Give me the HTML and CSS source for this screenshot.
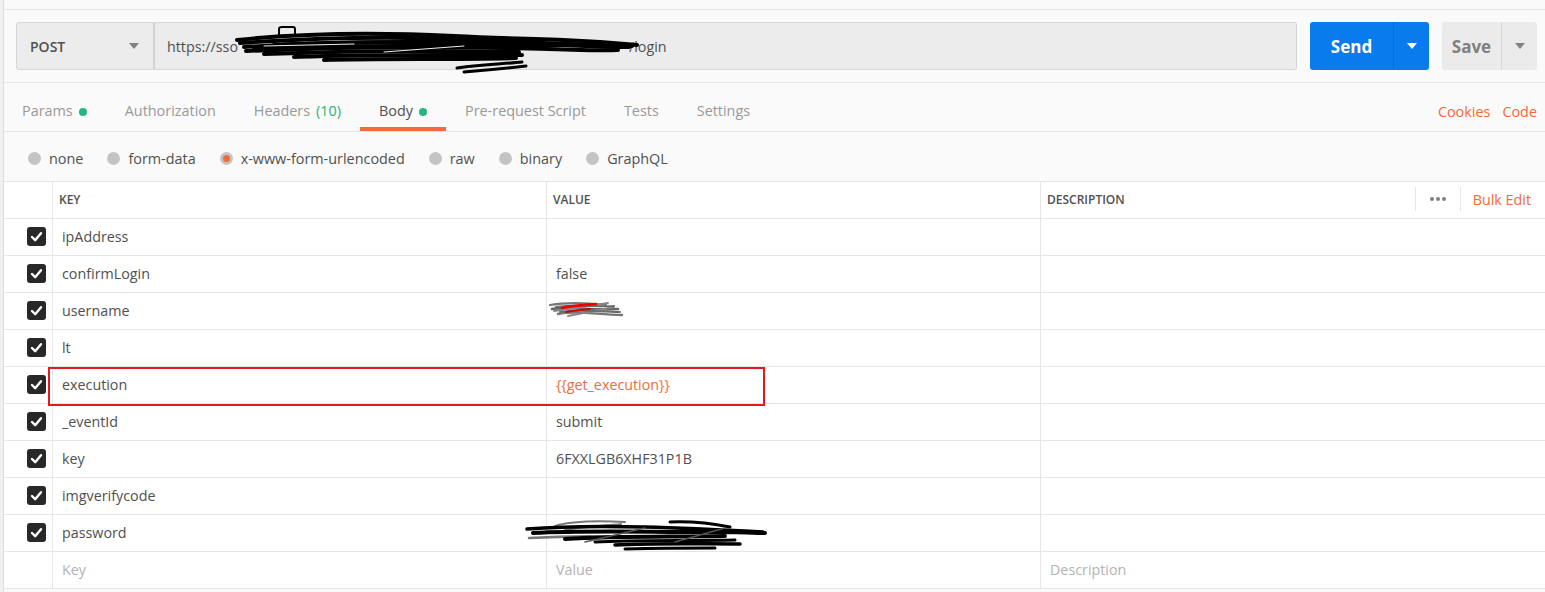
FILE: index.html
```html
<!DOCTYPE html>
<html lang="en">
  <head>
    <meta charset="UTF-8" />
    <meta name="viewport" content="width=device-width, initial-scale=1.0" />
    <title>POST login</title>
    <link rel="stylesheet" href="styles.css">
  </head>
  <body>
    <div class="edge"></div>
    <div class="main">
      <div class="top-strip"></div>

      <div class="url-bar">
        <div class="method">POST <span class="caret"></span></div>
        <div class="url">
          <span class="url-text">https://sso<span class="url-redact"><svg width="410" height="52" viewBox="0 0 410 52" fill="none" stroke="#000" stroke-width="4" stroke-linecap="round">
                <path d="M3 16 C60 10 140 8 220 12 S330 14 403 21" />
                <path d="M6 19 C80 14 160 12 240 16 S340 20 398 22" />
                <path d="M10 23 C90 18 170 17 260 19 S350 23 395 23" />
                <path d="M12 27 C100 23 180 22 270 24 S360 27 384 26" />
                <path d="M30 30 C110 27 190 26 285 28" />
                <path d="M60 33 C120 30 200 31 288 31" />
                <path d="M90 36 C150 34 220 36 282 34" />
                <path d="M40 21 C120 17 200 19 300 17" />
                <path d="M20 25 C110 21 200 22 330 21" />
                <path d="M223 44 C250 40 270 40 288 38" stroke-width="3" />
                <path d="M230 48 C255 46 275 44 292 42" stroke-width="3" />
                <path d="M45 13 L45 5 Q45 3 48 3 L59 3 Q61 3 61 5 L61 12" stroke-width="2" />
                <path d="M30 22 L120 20 M150 28 L230 22" stroke="#eee" stroke-width="1" />
              </svg></span>/login</span>
        </div>
        <div class="btn-send">
          <span class="btn-label">Send</span>
          <span class="btn-drop"><span class="caret caret-white"></span></span>
        </div>
        <div class="btn-save">
          <span class="btn-label">Save</span>
          <span class="btn-drop"><span class="caret"></span></span>
        </div>
      </div>

      <div class="tabs">
        <a class="tab">Params <span class="dot"></span></a>
        <a class="tab">Authorization</a>
        <a class="tab">Headers <span class="count">(10)</span></a>
        <a class="tab active">Body <span class="dot"></span></a>
        <a class="tab">Pre-request Script</a>
        <a class="tab">Tests</a>
        <a class="tab">Settings</a>
        <div class="tab-links">
          <a>Cookies</a>
          <a>Code</a>
        </div>
      </div>

      <div class="body-types">
        <label class="radio"><span class="circle"></span>none</label>
        <label class="radio"><span class="circle"></span>form-data</label>
        <label class="radio"><span class="circle checked"></span>x-www-form-urlencoded</label>
        <label class="radio"><span class="circle"></span>raw</label>
        <label class="radio"><span class="circle"></span>binary</label>
        <label class="radio"><span class="circle"></span>GraphQL</label>
      </div>

      <div class="kv-table">
        <div class="kv-row kv-head">
          <div class="cell check-cell"></div>
          <div class="cell">KEY</div>
          <div class="cell">VALUE</div>
          <div class="cell desc-head">
            <span>DESCRIPTION</span>
            <div class="head-actions">
              <span class="more"><i></i><i></i><i></i></span>
              <a class="bulk">Bulk Edit</a>
            </div>
          </div>
        </div>

        <div class="kv-row">
          <div class="cell check-cell"><span class="checkbox"><svg width="19" height="19" viewBox="0 0 19 19"><path d="M5 10 L8.2 13.2 L14 6.2" /></svg></span></div>
          <div class="cell">ipAddress</div>
          <div class="cell"></div>
          <div class="cell"></div>
        </div>
        <div class="kv-row">
          <div class="cell check-cell"><span class="checkbox"><svg width="19" height="19" viewBox="0 0 19 19"><path d="M5 10 L8.2 13.2 L14 6.2" /></svg></span></div>
          <div class="cell">confirmLogin</div>
          <div class="cell">false</div>
          <div class="cell"></div>
        </div>
        <div class="kv-row">
          <div class="cell check-cell"><span class="checkbox"><svg width="19" height="19" viewBox="0 0 19 19"><path d="M5 10 L8.2 13.2 L14 6.2" /></svg></span></div>
          <div class="cell">username</div>
          <div class="cell redact-cell">
            <svg class="user-redact" width="78" height="22" viewBox="0 0 78 22" fill="none" stroke-linecap="round">
              <path d="M2 6 C20 3 40 4 58 6" stroke="#777" stroke-width="2.2" />
              <path d="M4 10 C25 7 45 12 70 10" stroke="#666" stroke-width="2.6" />
              <path d="M10 15 C30 11 50 16 74 16" stroke="#777" stroke-width="2.4" />
              <path d="M6 12 L60 4 M20 17 L66 8" stroke="#888" stroke-width="1.8" />
              <path d="M8 8 C30 5 50 8 66 7 M12 13 C32 10 50 13 72 13" stroke="#6d6d6d" stroke-width="2" />
              <path d="M14 9 C26 6 36 6 48 5" stroke="#e00" stroke-width="2.6" />
              <path d="M18 13 C28 11 34 11 42 10" stroke="#c00" stroke-width="1.8" />
            </svg>
          </div>
          <div class="cell"></div>
        </div>
        <div class="kv-row">
          <div class="cell check-cell"><span class="checkbox"><svg width="19" height="19" viewBox="0 0 19 19"><path d="M5 10 L8.2 13.2 L14 6.2" /></svg></span></div>
          <div class="cell">lt</div>
          <div class="cell"></div>
          <div class="cell"></div>
        </div>
        <div class="kv-row marked">
          <div class="cell check-cell"><span class="checkbox"><svg width="19" height="19" viewBox="0 0 19 19"><path d="M5 10 L8.2 13.2 L14 6.2" /></svg></span></div>
          <div class="cell">execution</div>
          <div class="cell variable">{{get_execution}}</div>
          <div class="cell"></div>
          <div class="highlight"></div>
        </div>
        <div class="kv-row">
          <div class="cell check-cell"><span class="checkbox"><svg width="19" height="19" viewBox="0 0 19 19"><path d="M5 10 L8.2 13.2 L14 6.2" /></svg></span></div>
          <div class="cell">_eventId</div>
          <div class="cell">submit</div>
          <div class="cell"></div>
        </div>
        <div class="kv-row">
          <div class="cell check-cell"><span class="checkbox"><svg width="19" height="19" viewBox="0 0 19 19"><path d="M5 10 L8.2 13.2 L14 6.2" /></svg></span></div>
          <div class="cell">key</div>
          <div class="cell">6FXXLGB6XHF31P1B</div>
          <div class="cell"></div>
        </div>
        <div class="kv-row">
          <div class="cell check-cell"><span class="checkbox"><svg width="19" height="19" viewBox="0 0 19 19"><path d="M5 10 L8.2 13.2 L14 6.2" /></svg></span></div>
          <div class="cell">imgverifycode</div>
          <div class="cell"></div>
          <div class="cell"></div>
        </div>
        <div class="kv-row">
          <div class="cell check-cell"><span class="checkbox"><svg width="19" height="19" viewBox="0 0 19 19"><path d="M5 10 L8.2 13.2 L14 6.2" /></svg></span></div>
          <div class="cell">password</div>
          <div class="cell redact-cell">
            <svg class="pass-redact" width="245" height="34" viewBox="0 0 245 34" fill="none" stroke-linecap="round">
              <path d="M30 8 C50 2 80 3 100 4 M40 12 C60 8 80 8 96 6" stroke="#777" stroke-width="2" />
              <path d="M2 11 C40 8 80 8 120 9 S200 12 238 14" stroke="#000" stroke-width="3.5" />
              <path d="M8 15 C60 12 120 14 180 14 S220 15 240 15" stroke="#000" stroke-width="4" />
              <path d="M4 20 C40 18 70 18 100 19" stroke="#777" stroke-width="2.6" />
              <path d="M40 21 C90 18 140 19 200 18" stroke="#000" stroke-width="4" />
              <path d="M70 24 C110 22 160 23 210 22" stroke="#000" stroke-width="3" />
              <path d="M90 27 C130 25 170 26 215 26" stroke="#000" stroke-width="3.5" />
              <path d="M100 31 C140 30 170 30 190 30" stroke="#000" stroke-width="3" />
              <path d="M145 4 C170 3 190 6 205 9" stroke="#000" stroke-width="3" />
              <path d="M60 24 L120 10 M150 24 L200 10" stroke="#555" stroke-width="1.4" />
            </svg>
          </div>
          <div class="cell"></div>
        </div>
        <div class="kv-row">
          <div class="cell check-cell"></div>
          <div class="cell placeholder">Key</div>
          <div class="cell placeholder">Value</div>
          <div class="cell placeholder">Description</div>
        </div>
      </div>
    </div>
  </body>
</html>
```

FILE: styles.css
```css
body {
  font-family: "Open Sans", "Noto Sans", sans-serif;
  margin: 0;
  padding: 0;
  background: #fafafa;
  color: #505050;
  display: flex;
  height: 592px;
  overflow: hidden;
}
a {
  cursor: pointer;
}
.edge {
  width: 3px;
  background: #f0f0f0;
  border-right: 1px solid #dcdcdc;
  flex-shrink: 0;
}
.main {
  flex: 1;
  min-width: 0;
}
.top-strip {
  height: 9px;
  border-bottom: 1px solid #e6e6e6;
}

/* request url bar */
.url-bar {
  display: flex;
  align-items: stretch;
  height: 48px;
  padding: 12px 8px 12px 12px;
  border-bottom: 1px solid #e6e6e6;
}
.method {
  display: flex;
  align-items: center;
  justify-content: space-between;
  padding: 0 14px 0 13px;
  box-sizing: border-box;
  width: 138px;
  background: #ececec;
  border: 1px solid #d6d6d6;
  border-radius: 3px 0 0 3px;
  font-size: 14px;
  font-weight: 600;
  color: #505050;
}
.caret {
  display: inline-block;
  width: 0;
  height: 0;
  border-left: 5px solid transparent;
  border-right: 5px solid transparent;
  border-top: 6px solid #808080;
}
.caret-white {
  border-top-color: #fff;
}
.url {
  flex: 1;
  display: flex;
  align-items: center;
  padding-left: 12px;
  background: #ececec;
  border: 1px solid #d6d6d6;
  border-left: 1px solid #d0d0d0;
  border-radius: 0 3px 3px 0;
  font-size: 14.3px;
  color: #505050;
}
.url-text {
  white-space: nowrap;
}
.url-redact {
  position: relative;
  display: inline-block;
  width: 391px;
  height: 16px;
}
.url-redact svg {
  position: absolute;
  left: -4px;
  top: -12px;
}
.btn-send,
.btn-save {
  display: flex;
  border-radius: 3px;
  margin-left: 13px;
  font-size: 17px;
  font-weight: 700;
}
.btn-send {
  width: 119px;
  background: #097bed;
  color: #fff;
}
.btn-save {
  width: 95px;
  background: #ebebeb;
  color: #808080;
}
.btn-label {
  flex: 1;
  display: flex;
  align-items: center;
  justify-content: center;
}
.btn-drop {
  width: 35px;
  display: flex;
  align-items: center;
  justify-content: center;
}
.btn-send .btn-drop {
  border-left: 1px solid #0a6ed6;
}
.btn-save .btn-drop {
  border-left: 1px solid #d8d8d8;
}

/* tabs */
.tabs {
  display: flex;
  height: 48px;
  border-bottom: 1px solid #e6e6e6;
}
.tab {
  display: flex;
  align-items: flex-start;
  gap: 6px;
  height: 48px;
  box-sizing: border-box;
  padding: 18px 19px 0;
  border-bottom: 4px solid transparent;
  font-size: 14.4px;
  color: #999;
}
.tab:first-child {
  padding-left: 18px;
}
.tab.active {
  color: #505050;
  border-bottom-color: #f26b3a;
}
.dot {
  width: 8px;
  height: 8px;
  border-radius: 50%;
  background: #26b47f;
  margin-top: 7px;
}
.count {
  color: #26b47f;
}
.tab-links {
  margin-left: auto;
  display: flex;
  gap: 12px;
  padding: 19px 8px 0 0;
  font-size: 14.4px;
}
.tab-links a {
  color: #f26b3a;
}

/* body type radios */
.body-types {
  display: flex;
  align-items: center;
  gap: 24px;
  height: 50px;
  padding: 4px 0 0 24px;
  box-sizing: border-box;
  border-bottom: 1px solid #e6e6e6;
  font-size: 14.4px;
}
.radio {
  display: flex;
  align-items: center;
  gap: 8px;
  color: #505050;
}
.circle {
  position: relative;
  width: 13px;
  height: 13px;
  border-radius: 50%;
  background: #c4c4c4;
}
.circle.checked::after {
  content: "";
  position: absolute;
  left: 3px;
  top: 3px;
  width: 7px;
  height: 7px;
  border-radius: 50%;
  background: #f26b3a;
}

/* key value table */
.kv-table {
  background: #fff;
}
.kv-row {
  display: grid;
  grid-template-columns: 49px 494px 494px 1fr;
  height: 37px;
  border-bottom: 1px solid #e6e6e6;
  box-sizing: border-box;
}
.cell {
  display: flex;
  align-items: center;
  padding: 0 0 2px 9px;
  border-right: 1px solid #e6e6e6;
  font-size: 14.3px;
  color: #505050;
  white-space: nowrap;
}
.kv-row .cell:nth-child(4) {
  border-right: none;
}
.kv-head .cell {
  padding-left: 6px;
  font-size: 12px;
  font-weight: 600;
}
.check-cell {
  padding-left: 23px;
}
.kv-row .check-cell {
  padding-bottom: 1px;
}
.checkbox {
  width: 19px;
  height: 19px;
  border-radius: 3px;
  background: #282828;
}
.checkbox path {
  fill: none;
  stroke: #fff;
  stroke-width: 2.4;
  stroke-linecap: round;
  stroke-linejoin: round;
}
.desc-head {
  justify-content: space-between;
}
.head-actions {
  display: flex;
  align-items: center;
  height: 100%;
  font-weight: 400;
}
.more {
  display: flex;
  gap: 2px;
  height: 24px;
  align-items: center;
  padding: 0 14px;
  border-left: 1px solid #e6e6e6;
  border-right: 1px solid #e6e6e6;
}
.more i {
  width: 4px;
  height: 4px;
  border-radius: 50%;
  background: #808080;
}
.bulk {
  padding: 0 14px 0 12px;
  font-size: 14.3px;
  color: #f26b3a;
}
.variable {
  color: #f26b3a;
}
.placeholder {
  color: #b3b3b3;
}
.redact-cell {
  position: relative;
}
.user-redact {
  position: absolute;
  left: 1px;
  top: 6px;
}
.pass-redact {
  position: absolute;
  left: -22px;
  top: 3px;
}
.marked {
  position: relative;
}
.highlight {
  position: absolute;
  left: 44px;
  top: 0;
  width: 717px;
  height: 39px;
  box-sizing: border-box;
  border: 2px solid #e3191b;
  pointer-events: none;
}
```
